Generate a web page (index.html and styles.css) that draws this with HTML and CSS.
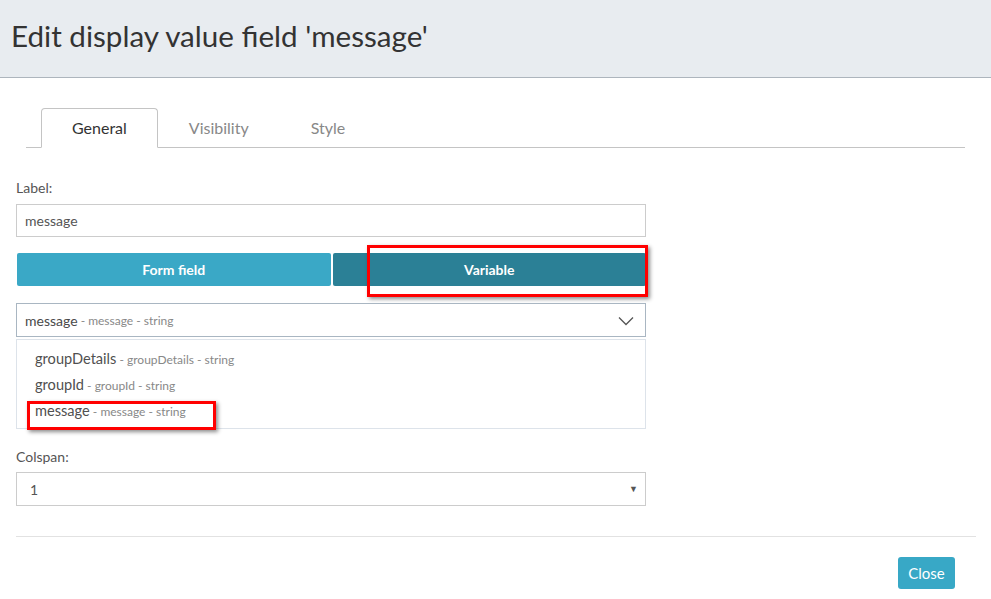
FILE: index.html
```html
<!DOCTYPE html>
<html>
<head>
<meta charset="utf-8">
<link rel="stylesheet" href="styles.css">
</head>
<body>
<div class="header"><h1 class="title">Edit display value field 'message'</h1></div>
<div class="content">
  <div class="tabs">
    <div class="tab active">General</div>
    <div class="tab">Visibility</div>
    <div class="tab">Style</div>
  </div>
  <div class="form">
    <div class="label">Label:</div>
    <div class="input">message</div>
    <div class="toggle">
      <div class="tbtn light">Form field</div>
      <div class="tbtn dark">Variable</div>
      <div class="mark mark1"></div>
    </div>
    <div class="select focus">
      <span class="main">message</span><span class="sub"> - message - string</span>
      <svg class="chev" width="16" height="10" viewBox="0 0 16 10"><path d="M1 1.5 L8 8.5 L15 1.5" fill="none" stroke="#555" stroke-width="1.3"/></svg>
    </div>
    <div class="list">
      <div class="item"><span class="main">groupDetails</span><span class="sub"> - groupDetails - string</span></div>
      <div class="item"><span class="main">groupId</span><span class="sub"> - groupId - string</span></div>
      <div class="item"><span class="main">message</span><span class="sub"> - message - string</span></div>
      <div class="mark mark2"></div>
    </div>
    <div class="label colspan">Colspan:</div>
    <div class="select plain">
      <span class="val">1</span>
      <span class="caret">&#9660;</span>
    </div>
  </div>
  <div class="divider"></div>
  <div class="footer"><button class="close">Close</button></div>
</div>
</body>
</html>
```
FILE: styles.css
```css
* { box-sizing: border-box; }
body { margin: 0; font-family: Lato, "Open Sans", sans-serif; color: #333; background: #fff; width: 991px; height: 599px; overflow: hidden; }
.header { height: 78px; background: #e8ecf0; border-bottom: 1px solid #adb5bd; display: flex; align-items: center; padding-left: 11px; }
.title { margin: 0; font-weight: 400; font-size: 29.6px; color: #333; padding-bottom: 6px; }
.content { padding: 0 16px; }
.tabs { margin: 30px 10px 0 10px; display: flex; border-bottom: 1px solid #c4c4c4; height: 40px; padding-left: 15px; }
.tab { padding: 0 31px; font-size: 16px; color: #888; line-height: 40px; height: 40px; }
.tab.active { color: #333; border: 1px solid #c4c4c4; border-bottom: 1px solid #fff; border-radius: 4px 4px 0 0; height: 40px; line-height: 38px; padding: 0 30px; background: #fff; }
.form { width: 630px; }
.label { font-size: 14px; color: #555; margin-top: 31px; height: 18px; line-height: 18px; }
.input { margin-top: 7px; height: 33px; border: 1px solid #ccc; padding: 0 8px; font-size: 14px; line-height: 31px; color: #555; }
.toggle { position: relative; margin-top: 16px; display: flex; gap: 2px; height: 33px; padding-left: 1px; }
.tbtn { flex: 1; color: #fff; font-size: 14px; font-weight: 700; text-align: center; line-height: 33px; border-radius: 2px; }
.tbtn.light { background: #3aa8c6; }
.tbtn.dark { background: #2b8096; }
.mark { position: absolute; border: 3px solid #f00; box-shadow: 2px 2px 4px rgba(0,0,0,0.45); }
.mark1 { left: 351px; top: -8px; width: 281px; height: 52px; }
.select { margin-top: 17px; height: 34px; border: 1px solid #ccc; padding: 0 8px; display: flex; align-items: center; font-size: 14px; color: #555; position: relative; }
.select.focus { border-color: #a9b6c2; }
.main { font-size: 14px; color: #4a4a4a; }
.sub { font-size: 12px; color: #888; white-space: pre; }
.list .main { font-size: 14.6px; color: #505050; }
.chev { position: absolute; right: 11px; top: 12px; }
.list { position: relative; margin-top: 2px; height: 90px; border: 1px solid #dde3ea; padding-top: 9px; padding-left: 18px; }
.item { height: 26px; line-height: 18px; }
.mark2 { left: 10px; top: 61px; width: 189px; height: 29px; }
.colspan { margin-top: 19px; }
.plain { margin-top: 6px; }
.val { font-size: 14px; color: #555; padding-left: 5px; }
.caret { position: absolute; right: 7px; top: 10px; font-size: 9px; color: #555; }
.divider { margin-top: 30px; height: 1px; background: #e2e2e2; width: 960px; }
.footer { display: flex; justify-content: flex-end; padding-right: 20px; margin-top: 20px; }
.close { background: #38a8c6; color: #fff; border: 0; border-radius: 3px; font-family: Lato, sans-serif; font-size: 15px; width: 57px; height: 32px; padding: 0; }
```
